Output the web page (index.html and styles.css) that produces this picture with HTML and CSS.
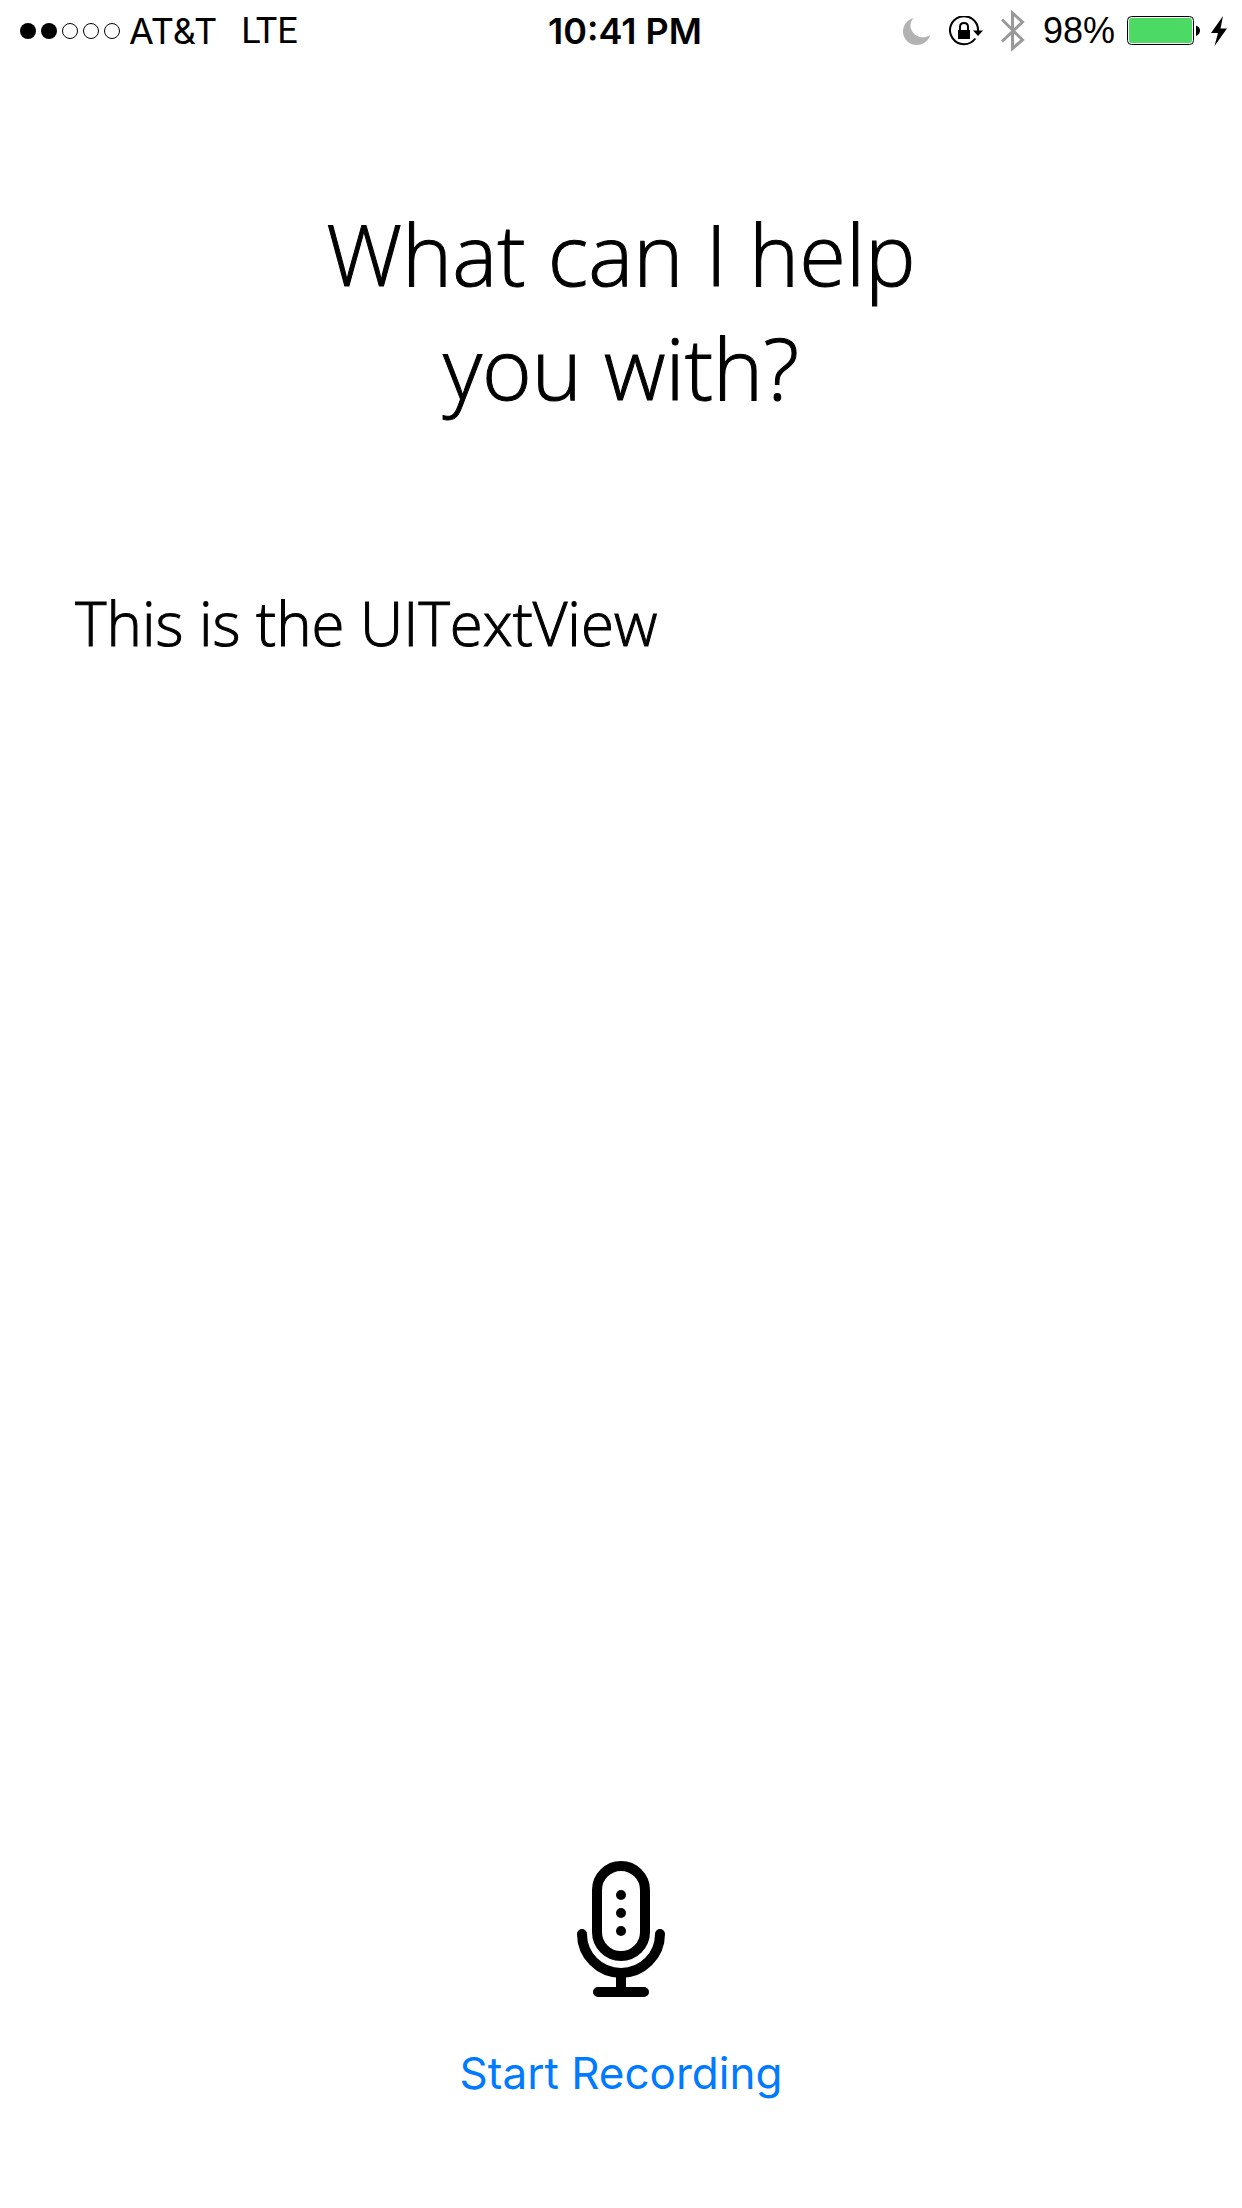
FILE: index.html
```
<!DOCTYPE html>
<html lang="en">
<head>
<meta charset="utf-8">
<meta name="viewport" content="width=device-width, initial-scale=1">
<title>Voice Assistant</title>
<link rel="stylesheet" href="styles.css">
</head>
<body>
<header class="status">
  <div class="status-left">
    <svg class="signal" width="100" height="16" viewBox="0 0 100 16" role="img" aria-label="Signal: 2 of 5">
      <circle cx="8" cy="8" r="8"/><circle cx="29" cy="8" r="8"/>
      <g fill="none" stroke="#000"><circle cx="50" cy="8" r="7.5"/><circle cx="71" cy="8" r="7.5"/><circle cx="92" cy="8" r="7.5"/></g>
    </svg>
    <span class="carrier">AT&amp;T</span>
    <span class="network">LTE</span>
  </div>
  <time class="clock">10:41 PM</time>
  <div class="status-right">
    <svg width="28" height="28" viewBox="0 0 28 28" fill="#b2b2b2" aria-hidden="true">
      <path d="M10.500 1C7 5 6.500 10 9 14C12.500 20 20 22.500 27.300 18C25.500 24 20 28 13.500 28C6 28 0 22 0 14.500C0 8 4.300 2.800 10.500 1Z"/>
    </svg>
    <svg width="34" height="30" viewBox="0 0 34 30" aria-hidden="true">
      <path d="M26.300 22.500A14 14 0 1 1 29 15" fill="none" stroke="#000" stroke-width="2"/>
      <path d="M24 14.500H34L29 20Z"/>
      <path d="M9 14H21V23H9Z"/>
      <path d="M11 14V11Q11 7 15 7T19 11V14" fill="none" stroke="#000" stroke-width="2"/>
    </svg>
    <svg width="24" height="42" viewBox="0 0 24 42" fill="none" stroke="#999" stroke-width="3" aria-hidden="true">
      <path d="M1 9.500L21.500 30L11.500 38.500V3L21.500 12L1 31.500"/>
    </svg>
    <span class="percent">98%</span>
    <svg class="battery" width="74" height="30" viewBox="0 0 74 30" aria-hidden="true">
      <rect x=".5" y=".5" width="66" height="28" rx="4" fill="#fff" stroke="#000"/>
      <rect x="2" y="2" width="63" height="25" rx="3" fill="#4cd964"/>
      <path d="M69 9.500Q73 11 73 14.500T69 20Z"/>
    </svg>
    <svg class="bolt" width="16" height="30" viewBox="0 0 16 30" aria-hidden="true">
      <path d="M12 0L0 17H7L3.500 30L16 12.500H9.500Z"/>
    </svg>
  </div>
</header>
<main class="screen">
  <h1 class="title"><label for="transcript">What can I help you with?</label></h1>
  <textarea class="transcript" id="transcript" spellcheck="false">This is the UITextView</textarea>
  <div class="recorder">
    <svg width="88" height="136" viewBox="0 0 88 136" fill="none" stroke="#000" stroke-width="10" stroke-linecap="round" aria-hidden="true">
      <rect x="20" y="5" width="48" height="90" rx="24"/>
      <path d="M5 73A39 39 0 0 0 83 73M44 113V130M21 131H67"/>
      <g fill="#000" stroke="none"><circle cx="44" cy="34" r="5"/><circle cx="44" cy="52" r="5"/><circle cx="44" cy="70" r="5"/></g>
    </svg>
    <button class="record" type="button">Start Recording</button>
  </div>
</main>
</body>
</html>
```
FILE: styles.css
```
* {
  box-sizing: border-box;
}

body {
  display: flex;
  flex-direction: column;
  min-height: 100vh;
  margin: 0;
  background: #fff;
  color: #000;
  font-family: Inter, "Liberation Sans", sans-serif;
}

.status {
  display: grid;
  grid-template-columns: 1fr auto 1fr;
  align-items: center;
  height: 62px;
  padding: 0 12px 0 20px;
  font-size: 36px;
  line-height: 62px;
}

.status-left,
.status-right {
  display: flex;
  align-items: center;
}

.carrier {
  margin-left: 9px;
}

.network {
  margin-left: 24px;
  font-family: Roboto, sans-serif;
}

.clock {
  font-weight: 600;
}

.status-right {
  justify-content: flex-end;
  gap: 18px;
  padding-right: 3px;
}

.percent {
  font-family: "Liberation Sans", sans-serif;
}

.battery {
  margin-left: -6px;
}

.bolt {
  margin-left: -8px;
}

.screen {
  display: flex;
  flex: 1;
  flex-direction: column;
  padding: 134px 75px 105px;
}

.title,
.transcript {
  font-family: "Open Sans", sans-serif;
  font-weight: 300;
  -webkit-text-stroke: 1px currentColor;
}

.title {
  max-width: 720px;
  margin: 0 auto;
  font-size: 85px;
  line-height: 114px;
  text-align: center;
}

.transcript {
  flex: 1;
  width: 100%;
  margin: 158px 0 40px;
  padding: 0;
  border: 0;
  outline: 0;
  resize: none;
  background: none;
  color: inherit;
  font-size: 60px;
  line-height: 82px;
}

.recorder {
  display: flex;
  flex-direction: column;
  align-items: center;
  gap: 46px;
}

.record {
  padding: 0;
  border: 0;
  background: none;
  color: #007aff;
  font: 400 44px/60px Inter, sans-serif;
}
```
